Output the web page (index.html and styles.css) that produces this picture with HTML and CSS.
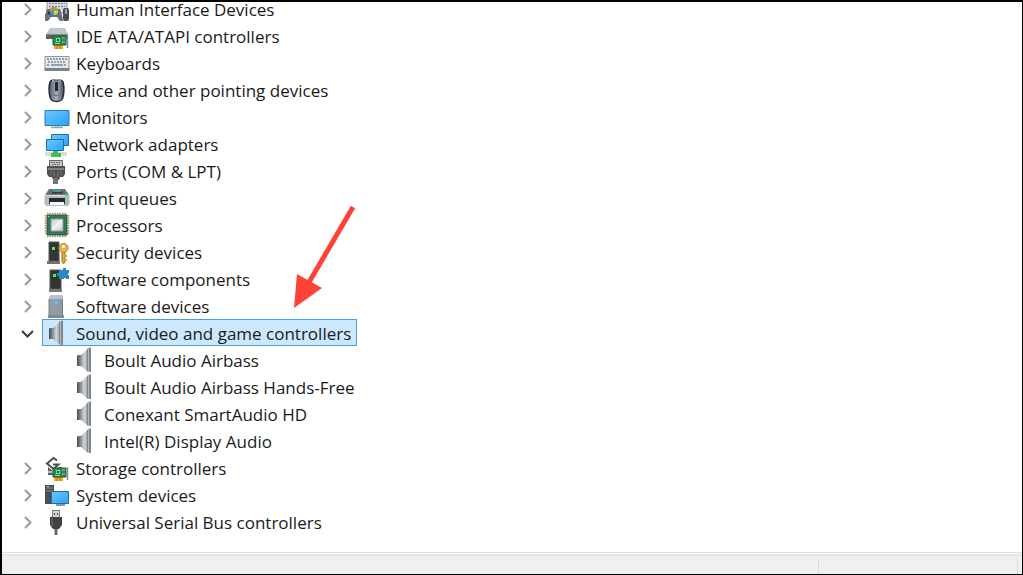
FILE: index.html
```html
<!DOCTYPE html>
<html lang="en">
<head>
<meta charset="utf-8">
<title>Device Manager</title>
<link rel="stylesheet" href="styles.css">
</head>
<body>
<svg class="defs" aria-hidden="true">
  <defs>
    <linearGradient id="screen" x1="0" y1="0" x2="1" y2="1"><stop offset="0" stop-color="#6cc8ff"/><stop offset="1" stop-color="#2ba3f7"/></linearGradient>
    <linearGradient id="cone" x1="0" y1="0" x2="1" y2="0"><stop offset="0" stop-color="#8d9297"/><stop offset=".45" stop-color="#d3d6d9"/><stop offset="1" stop-color="#959ba1"/></linearGradient>
    <linearGradient id="magnet" x1="0" y1="0" x2="1" y2="0"><stop offset="0" stop-color="#3f4a56"/><stop offset="1" stop-color="#a5adb5"/></linearGradient>
    <linearGradient id="mousebody" x1="0" y1="0" x2="1" y2="0"><stop offset="0" stop-color="#59636f"/><stop offset=".5" stop-color="#a3adb9"/><stop offset="1" stop-color="#4c5561"/></linearGradient>
    <linearGradient id="die" x1="0" y1="0" x2="1" y2="1"><stop offset="0" stop-color="#c4c7c6"/><stop offset=".5" stop-color="#f1f2f1"/><stop offset="1" stop-color="#c6c9c7"/></linearGradient>
    <symbol id="chevron" viewBox="0 0 16 16"><path d="M5 3l5.500 5.500L5 14" fill="none" stroke="#9a9a9a" stroke-width="2"/></symbol>
    <symbol id="chevron-open" viewBox="0 0 16 16"><path d="M2 6l5.500 5.500L13 6" fill="none" stroke="#3a3a3a" stroke-width="2"/></symbol>
    <symbol id="card" viewBox="0 0 18 14">
      <path d="M2 9h9v5H2z" fill="#f5a81c"/><path d="M5 10v4M8 10v4" stroke="#c87a08"/>
      <path d="M1 1h13v9H1z" fill="#2c8b55" stroke="#14613a"/><path d="M4 3h4v4H4z" fill="#8fd0a4"/><path d="M5 4h2v2H5z" fill="#17603a"/>
      <path d="M10 3h3M10 7h3M3 8.500h5" stroke="#8fd0a4"/><path d="M15.500 0v13" stroke="#8b8f92" stroke-width="1.500"/>
    </symbol>
    <symbol id="speaker" viewBox="0 0 26 26">
      <path d="M5 8h5v11H5z" fill="url(#magnet)"/><path d="M5 8.500h5" stroke="#727b84"/>
      <path d="M9 8l7-6.500V25l-7-6z" fill="url(#cone)"/><path d="M15 2l3-1.500h1V25h-1l-3-1z" fill="#7e858d"/><path d="M16.500 1.500V25" stroke="#b4b9be"/>
    </symbol>
  </defs>
</svg>
<main class="window">
  <ul class="tree">
    <li class="row"><button class="toggle" aria-label="Expand Human Interface Devices"><svg><use href="#chevron"/></svg></button><span class="item">
      <svg class="icon" viewBox="0 0 26 26"><path d="M3 5h20v12H3z" fill="#d3d9dd" stroke="#929ba3"/><path d="M5 7.500h16M5 10.500h16" stroke="#7e8790" stroke-dasharray="2 1"/><path d="M3 13h5l2 3 2-3h4l2 6 1 6h-3l-3-4H7l-3 4H1V19z" fill="#66717c"/><circle cx="5" cy="17" r="1.500" fill="#2e363e"/><circle cx="10" cy="15" r="4" fill="#2f9be8"/><path d="M6 15a4 4 0 0 1 4-4v4z" fill="#f07633"/><path d="M10 11a4 4 0 0 1 4 4h-4z" fill="#79bf41"/><path d="M10 15h4a4 4 0 0 1-4 4z" fill="#f5cb3b"/><rect x="19" y="12" width="6" height="13" rx="2" fill="#454e58"/><path d="M22 13v5" stroke="#9aa5b0" stroke-width="2"/></svg><span class="label">Human Interface Devices</span></span></li>
    <li class="row"><button class="toggle" aria-label="Expand IDE ATA/ATAPI controllers"><svg><use href="#chevron"/></svg></button><span class="item">
      <svg class="icon" viewBox="0 0 26 26"><path d="M6 5h15l3 6H2z" fill="#c3c6c8"/><path d="M2 11h22v5H2z" fill="#5b6165"/><path d="M2 11.500h22" stroke="#858b8e"/><use href="#card" x="8" y="12" width="18" height="14"/></svg><span class="label">IDE ATA/ATAPI controllers</span></span></li>
    <li class="row"><button class="toggle" aria-label="Expand Keyboards"><svg><use href="#chevron"/></svg></button><span class="item">
      <svg class="icon" viewBox="0 0 26 26"><path d="M1 6.500h24v13H1z" fill="#e4e8eb" stroke="#8f989f"/><path d="M.5 18h25v3H.5z" fill="#7a848c"/><path d="M3 9h20M4 12h18M3 15h3M20 15h3" stroke="#808a92" stroke-width="1.500" stroke-dasharray="2 1"/><path d="M7 15h12" stroke="#808a92" stroke-width="1.500"/></svg><span class="label">Keyboards</span></span></li>
    <li class="row"><button class="toggle" aria-label="Expand Mice and other pointing devices"><svg><use href="#chevron"/></svg></button><span class="item">
      <svg class="icon" viewBox="0 0 26 26"><path d="M6 5c1-3 12-3 13 0 1 4 1 11 0 15-1 6-12 6-13 0C5 16 5 9 6 5z" fill="url(#mousebody)" stroke="#252a30" stroke-width="1.500"/><path d="M8 4c3-2 6-2 9 0" fill="none" stroke="#cbd2da"/><rect x="11" y="5" width="3" height="9" fill="#22272d"/><path d="M7 17c3 2 8 2 11 0" fill="none" stroke="#68727d"/></svg><span class="label">Mice and other pointing devices</span></span></li>
    <li class="row"><button class="toggle" aria-label="Expand Monitors"><svg><use href="#chevron"/></svg></button><span class="item">
      <svg class="icon" viewBox="0 0 26 26"><path d="M1 6.500h24v15H1z" fill="url(#screen)" stroke="#287bb3"/><path d="M10 22h6v1h-6z" fill="#c5d0d8"/><path d="M7 23.500h12" stroke="#8fa2b2" stroke-width="1.500"/></svg><span class="label">Monitors</span></span></li>
    <li class="row"><button class="toggle" aria-label="Expand Network adapters"><svg><use href="#chevron"/></svg></button><span class="item">
      <svg class="icon" viewBox="0 0 26 26"><path d="M7.500 3.500h17v11h-17z" fill="url(#screen)" stroke="#226da1"/><path d="M2.500 8.500h17v11h-17z" fill="url(#screen)" stroke="#226da1"/><path d="M1 21h22v4H1z" fill="#d8dcda"/><path d="M9 20h5v2h3v4H7v-4h2z" fill="#43bd58"/></svg><span class="label">Network adapters</span></span></li>
    <li class="row"><button class="toggle" aria-label="Expand Ports (COM &amp; LPT)"><svg><use href="#chevron"/></svg></button><span class="item">
      <svg class="icon" viewBox="0 0 26 26"><path d="M5.500 2.500h13v6h-13z" fill="#c5c5c5" stroke="#666"/><path d="M7 4.500h10M8 6.500h8" stroke="#555" stroke-dasharray="1.500 1"/><path d="M3 8h18v8l-2 3h-3l-1 3H9l-1-3H5l-2-3z" fill="#505050"/><path d="M4 11h16" stroke="#838383" stroke-width="2"/><path d="M7 13v4M10 13v6M14 13v6M17 13v4" stroke="#787878"/><path d="M9 20h5v6H9z" fill="#747474"/></svg><span class="label">Ports (COM &amp; LPT)</span></span></li>
    <li class="row"><button class="toggle" aria-label="Expand Print queues"><svg><use href="#chevron"/></svg></button><span class="item">
      <svg class="icon" viewBox="0 0 26 26"><path d="M5 4h16l4 6H1z" fill="#697179"/><path d="M8 7.500h11" stroke="#343b41" stroke-width="2"/><path d="M9 6h8" stroke="#31d8bd"/><path d="M.5 10h25v9l-2 2h-21l-2-2z" fill="#b3bac1"/><path d="M1 10.500h24" stroke="#e1e5e8"/><path d="M5 13h16v6H5z" fill="#272b30"/><path d="M6 17h14v3H6z" fill="#f7f8f9"/><path d="M21 9h3v2h-3z" fill="#2fe06c"/></svg><span class="label">Print queues</span></span></li>
    <li class="row"><button class="toggle" aria-label="Expand Processors"><svg><use href="#chevron"/></svg></button><span class="item">
      <svg class="icon" viewBox="0 0 26 26"><path d="M3 1.500h20M3 24.500h20M1.500 3v20M24.500 3v20" stroke="#b29452" stroke-width="1.500" stroke-dasharray="1.500 1"/><path d="M3 3h20v20H3z" fill="#34765a" stroke="#235b43"/><path d="M7 7h12v12H7z" fill="url(#die)" stroke="#89998f"/><path d="M4 4h1v1H4z" fill="#c8ded2"/></svg><span class="label">Processors</span></span></li>
    <li class="row"><button class="toggle" aria-label="Expand Security devices"><svg><use href="#chevron"/></svg></button><span class="item">
      <svg class="icon" viewBox="0 0 26 26"><path d="M5 3h10v19H5z" fill="#343434" stroke="#555"/><path d="M3 22h13v3H3z" fill="#717171"/><path d="M8 8h3v3H8z" fill="#35ff43"/><path d="M18 11h3v12l-1.500 2-1.500-2z" fill="#dfab3d" stroke="#a87518"/><path d="M21 16h2v2h-2zM21 20h2v2h-2z" fill="#dfab3d"/><circle cx="19.500" cy="9" r="4.500" fill="#e6b44b" stroke="#b58121"/><circle cx="19.500" cy="7.500" r="1.500" fill="#fff"/></svg><span class="label">Security devices</span></span></li>
    <li class="row"><button class="toggle" aria-label="Expand Software components"><svg><use href="#chevron"/></svg></button><span class="item">
      <svg class="icon" viewBox="0 0 26 26"><path d="M6 4h11v19H6z" fill="#343434" stroke="#555"/><path d="M5 23h13v3H5z" fill="#777"/><path d="M9 8h3v3H9z" fill="#35ff43"/><path d="M15 4h4V2h3v2h3v3h-1v2h1v4h-3v-1h-2v1h-5v-3h-2V7h2z" fill="#2788c8"/></svg><span class="label">Software components</span></span></li>
    <li class="row"><button class="toggle" aria-label="Expand Software devices"><svg><use href="#chevron"/></svg></button><span class="item">
      <svg class="icon" viewBox="0 0 26 26"><path d="M7 2h11l1 3v17H5V5z" fill="#929ba4"/><path d="M7 2h11l1 4H5z" fill="#bbc1c7"/><path d="M5 6v16M18.500 6v16" stroke="#78828b"/><path d="M4 22h16v3H4z" fill="#848b91"/><path d="M11 8h3v3h-3z" fill="#30ddf4"/></svg><span class="label">Software devices</span></span></li>
    <li class="group">
      <div class="row"><button class="toggle" aria-expanded="true" aria-label="Collapse Sound, video and game controllers"><svg><use href="#chevron-open"/></svg></button><span class="item selected"><svg class="icon"><use href="#speaker"/></svg><span class="label">Sound, video and game controllers</span></span></div>
      <ul class="children">
        <li class="row"><span class="item"><svg class="icon"><use href="#speaker"/></svg><span class="label">Boult Audio Airbass</span></span></li>
        <li class="row"><span class="item"><svg class="icon"><use href="#speaker"/></svg><span class="label">Boult Audio Airbass Hands-Free</span></span></li>
        <li class="row"><span class="item"><svg class="icon"><use href="#speaker"/></svg><span class="label">Conexant SmartAudio HD</span></span></li>
        <li class="row"><span class="item"><svg class="icon"><use href="#speaker"/></svg><span class="label">Intel(R) Display Audio</span></span></li>
      </ul>
    </li>
    <li class="row"><button class="toggle" aria-label="Expand Storage controllers"><svg><use href="#chevron"/></svg></button><span class="item">
      <svg class="icon" viewBox="0 0 26 26"><path d="M4 12h14v8H4z" fill="#5b6063"/><path d="M4 17h10" stroke="#b9bdc0" stroke-width="2"/><path d="M13 5.500L9.500 3 3 8.500 9.500 14l5-4.500H9" fill="none" stroke="#fff" stroke-width="4"/><path d="M13 5.500L9.500 3 3 8.500 9.500 14l5-4.500H9" fill="none" stroke="#4d4d4d" stroke-width="2"/><use href="#card" x="8" y="12" width="18" height="14"/></svg><span class="label">Storage controllers</span></span></li>
    <li class="row"><button class="toggle" aria-label="Expand System devices"><svg><use href="#chevron"/></svg></button><span class="item">
      <svg class="icon" viewBox="0 0 26 26"><path d="M1 3h9v19H1z" fill="#4b4f53"/><path d="M2 6h7M2 9h7" stroke="#888e92"/><path d="M3 4h2v1H3z" fill="#4dff5f"/><path d="M7.500 9.500h17v12h-17z" fill="url(#screen)" stroke="#226da1"/><path d="M12 23h9" stroke="#8999a6" stroke-width="2"/></svg><span class="label">System devices</span></span></li>
    <li class="row"><button class="toggle" aria-label="Expand Universal Serial Bus controllers"><svg><use href="#chevron"/></svg></button><span class="item">
      <svg class="icon" viewBox="0 0 26 26"><path d="M8.500 1.500h7v7h-7z" fill="#d5d5d5" stroke="#777"/><path d="M10 4h1v2h-1zM13 4h1v2h-1z" fill="#444"/><path d="M6 8h12v8l-3 4H9l-3-4z" fill="#414141"/><path d="M8 9v8" stroke="#777"/><path d="M10.500 20h3v6h-3z" fill="#686868"/></svg><span class="label">Universal Serial Bus controllers</span></span></li>
  </ul>
  <svg class="arrow" viewBox="0 0 64 106" aria-hidden="true"><path d="M60 2L15 79" stroke="#ff4238" stroke-width="5"/><path d="M1 103L4 69l25 14z" fill="#ff4238"/></svg>
  <footer class="status"><span class="pane"></span><span class="pane side"></span><span class="pane grip"></span></footer>
</main>
</body>
</html>
```
FILE: styles.css
```css
* {
  box-sizing: border-box;
}

body {
  margin: 0;
  background: #000;
  color: #1a1a1a;
  font: 17px/27px "Open Sans", "Noto Sans", sans-serif;
}

.defs {
  position: absolute;
  width: 0;
  height: 0;
}

.window {
  position: relative;
  display: flex;
  flex-direction: column;
  height: 100vh;
  overflow: hidden;
  border: solid #000;
  border-width: 2px 1px 1px 2px;
  background: #fff;
}

.tree,
.children {
  margin: 0;
  padding: 0;
  list-style: none;
}

.tree {
  flex: 1;
  min-height: 0;
  margin-top: -7px;
  padding-left: 18px;
}

.children {
  padding-left: 50px;
}

.row {
  display: flex;
  align-items: center;
  height: 27px;
}

.toggle {
  display: flex;
  width: 22px;
  padding: 0;
  border: 0;
  background: none;
}

.toggle svg {
  width: 16px;
  height: 16px;
}

.item {
  display: flex;
  align-items: center;
  gap: 6px;
  height: 27px;
  padding: 0 5px 0 1px;
  border: 1px solid transparent;
  white-space: nowrap;
}

.selected {
  border-color: #4a9ee0;
  background: #cce8ff;
}

.icon {
  flex: none;
  width: 26px;
  height: 26px;
}

.label {
  padding-top: 2px;
}

.arrow {
  position: absolute;
  top: 203px;
  left: 291px;
  width: 64px;
  height: 106px;
}

.status {
  display: flex;
  height: 22px;
  padding-top: 5px;
  border-top: 1px solid #dcdcdc;
  background: linear-gradient(#fff 1px, #e6e6e6 1px, #e6e6e6 3px, #f0f0f0 3px);
}

.pane {
  flex: 1;
  border-right: 1px solid #dadada;
}

.side {
  flex: 0 0 199px;
}

.grip {
  flex: 0 0 4px;
  border: 0;
}
```
